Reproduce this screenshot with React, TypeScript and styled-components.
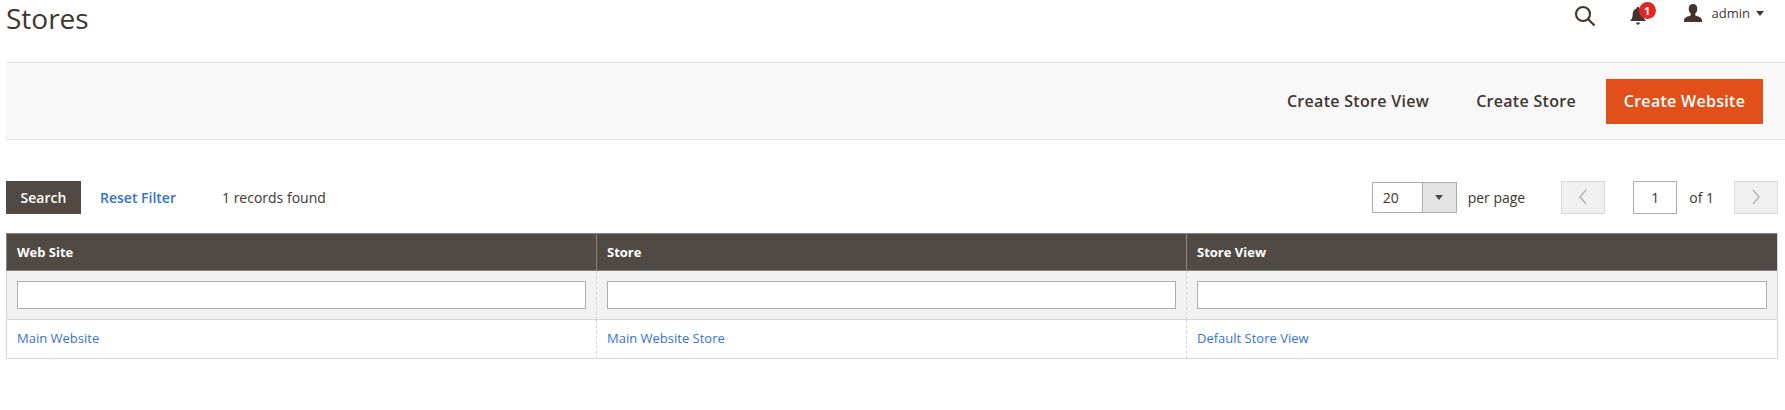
import React from 'react'
import styled, { createGlobalStyle } from 'styled-components'

const GlobalStyle = createGlobalStyle`
html, body { margin: 0; padding: 0; background: #fff; }
body { font-family: "Open Sans", "Liberation Sans", sans-serif; color: #41362f; }
`

const Page = styled.div`width: 1785px; height: 410px; overflow: hidden; padding-left: 6px; box-sizing: border-box;`

const Header = styled.header`display: flex; justify-content: space-between; height: 62px; box-sizing: border-box; padding-right: 21px;`
const Title = styled.h1`margin: 0; font-size: 28px; line-height: 36px; font-weight: 400; color: #41362f;`
const HeaderTools = styled.div`display: flex; align-items: flex-start; padding-top: 4px; height: 26px;`
const ToolIcon = styled.div`position: relative; display: flex; align-items: center; height: 24px;`
const SearchTool = styled(ToolIcon)`margin-right: 33px;`
const BellTool = styled(ToolIcon)`margin-right: 26px; width: 28px;`
const Badge = styled.span`position: absolute; left: 10px; top: -2px; width: 17px; height: 17px; border-radius: 50%; background: #e22626; color: #fff; font-size: 11px; font-weight: 700; line-height: 17px; text-align: center;`
const UserName = styled.span`font-size: 13px; margin-left: 9px; line-height: 24px; color: #41362f;`
const Caret = styled.span`margin-left: 6px; width: 0; height: 0; border-left: 4px solid transparent; border-right: 4px solid transparent; border-top: 5px solid #41362f; align-self: center;`
const UserTool = styled.div`display: flex; align-items: center; height: 24px; margin-top: -3px;`

const ActionBar = styled.div`display: flex; justify-content: flex-end; align-items: center; height: 78px; box-sizing: border-box; background: #f8f8f8; border-top: 1px solid #e3e3e3; border-bottom: 1px solid #e3e3e3; padding-right: 22px;`
const ActionLink = styled.button<{ $gap: number }>`border: 0; background: none; padding: 0; font: 600 16px "Open Sans", sans-serif; letter-spacing: .3px; color: #41362f; margin-right: ${p => p.$gap}px;`
const PrimaryButton = styled.button`border: 0; background: #e1501b; color: #fff; font: 600 16px "Open Sans", sans-serif; letter-spacing: .3px; width: 157px; height: 45px; padding: 0;`

const GridBar = styled.div`display: flex; align-items: center; justify-content: space-between; height: 34px; margin-top: 40px; padding-right: 7px;`
const BarSide = styled.div`display: flex; align-items: center;`
const SearchButton = styled.button`border: 0; background: #514943; color: #fff; font: 600 14px "Open Sans", sans-serif; width: 75px; height: 33px; padding: 0;`
const ResetLink = styled.a`color: #3572d2; font-size: 14px; font-weight: 600; margin-left: 19px;`
const Records = styled.span`font-size: 14px; margin-left: 46px; color: #41362f;`
const PageSelect = styled.div`display: flex; width: 85px; height: 31px; box-sizing: border-box; border: 1px solid #adadad; background: #fff;`
const SelectValue = styled.span`flex: 1; font-size: 14px; line-height: 29px; padding-left: 10px;`
const SelectArrow = styled.span`width: 33px; border-left: 1px solid #adadad; background: #e3e3e3; display: flex; align-items: center; justify-content: center;`
const SmallCaret = styled.span`width: 0; height: 0; border-left: 4px solid transparent; border-right: 4px solid transparent; border-top: 5px solid #514943;`
const PerPage = styled.span`font-size: 14px; margin-left: 11px; margin-right: 36px;`
const Pager = styled.div`width: 44px; height: 33px; box-sizing: border-box; border: 1px solid #d9d9d9; background: #f0f0f0; display: flex; align-items: center; justify-content: center;`
const PageInput = styled.div`width: 44px; height: 33px; box-sizing: border-box; border: 1px solid #adadad; background: #fff; font-size: 14px; line-height: 31px; text-align: center; margin-left: 28px;`
const OfText = styled.span`font-size: 14px; margin-left: 12px; margin-right: 20px;`

const Table = styled.div`display: grid; grid-template-columns: 590px 590px 591px; width: 1772px; margin-top: 19px; box-sizing: border-box; border-right: 1px solid #d6d6d6;`
const HeadCell = styled.div`background: #514943; color: #fff; font-size: 13px; font-weight: 700; height: 38px; line-height: 36px; box-sizing: border-box; padding-left: 10px; border-top: 1px solid #8a837e; border-bottom: 1px solid #8a837e; border-left: 1px solid #8a837e;`
const FilterCell = styled.div<{ $first?: boolean }>`background: #f2f2f2; height: 49px; box-sizing: border-box; padding: 10px 10px 0; border-bottom: 1px solid #d6d6d6; border-left: 1px ${p => p.$first ? 'solid' : 'dashed'} #d6d6d6;`
const FilterInput = styled.div`height: 28px; box-sizing: border-box; border: 1px solid #adadad; background: #fff;`
const DataCell = styled.div<{ $first?: boolean }>`height: 39px; box-sizing: border-box; padding-left: 10px; line-height: 37px; font-size: 13px; border-bottom: 1px solid #d6d6d6; border-left: 1px ${p => p.$first ? 'solid' : 'dashed'} #d6d6d6;`
const CellLink = styled.a`color: #3572d2;`

const columns = [
  { head: 'Web Site', value: 'Main Website' },
  { head: 'Store', value: 'Main Website Store' },
  { head: 'Store View', value: 'Default Store View' },
]

function App() {
  return (
    <Page>
      <GlobalStyle />
      <Header>
        <Title>Stores</Title>
        <HeaderTools>
          <SearchTool>
            <svg width="22" height="22" viewBox="0 0 22 22" fill="none" stroke="#41362f" strokeWidth="2.2">
              <circle cx="9" cy="9" r="7" />
              <path d="M14 14l6.5 6.5" />
            </svg>
          </SearchTool>
          <BellTool>
            <svg width="18" height="20" viewBox="0 0 18 20" fill="#41362f">
              <path d="M9 1c1 0 1.5.7 1.5 1.5C13 3.3 14.300 5.500 14.300 8c0 3 .7 5 2.700 7H1c2-2 2.700-4 2.700-7C3.700 5.500 5 3.300 7.500 2.500 7.500 1.700 8 1 9 1z" />
              <path d="M7 16.500h4c0 1.200-.9 2.300-2 2.300s-2-1.100-2-2.300z" />
            </svg>
            <Badge>1</Badge>
          </BellTool>
          <UserTool>
            <svg width="20" height="20" viewBox="0 0 20 20" fill="#41362f">
              <path d="M10 1c2.700 0 4.300 2 4.300 4.700 0 2.200-1 4-2.100 5v1.800c2.500.8 6.800 1.600 6.800 5V19H1v-1.500c0-3.400 4.300-4.200 6.800-5v-1.800c-1.100-1-2.100-2.800-2.100-5C5.700 3 7.300 1 10 1z" />
            </svg>
            <UserName>admin</UserName>
            <Caret />
          </UserTool>
        </HeaderTools>
      </Header>
      <ActionBar>
        <ActionLink $gap={47}>Create Store View</ActionLink>
        <ActionLink $gap={30}>Create Store</ActionLink>
        <PrimaryButton>Create Website</PrimaryButton>
      </ActionBar>
      <GridBar>
        <BarSide>
          <SearchButton>Search</SearchButton>
          <ResetLink>Reset Filter</ResetLink>
          <Records>1 records found</Records>
        </BarSide>
        <BarSide>
          <PageSelect>
            <SelectValue>20</SelectValue>
            <SelectArrow><SmallCaret /></SelectArrow>
          </PageSelect>
          <PerPage>per page</PerPage>
          <Pager>
            <svg width="10" height="16" viewBox="0 0 10 16" fill="none" stroke="#b5b5b5" strokeWidth="1.500"><path d="M8 1L2 8l6 7" /></svg>
          </Pager>
          <PageInput>1</PageInput>
          <OfText>of 1</OfText>
          <Pager>
            <svg width="10" height="16" viewBox="0 0 10 16" fill="none" stroke="#b5b5b5" strokeWidth="1.500"><path d="M2 1l6 7-6 7" /></svg>
          </Pager>
        </BarSide>
      </GridBar>
      <Table>
        {columns.map(c => <HeadCell key={c.head}>{c.head}</HeadCell>)}
        {columns.map((c, i) => <FilterCell key={c.head} $first={i === 0}><FilterInput /></FilterCell>)}
        {columns.map((c, i) => <DataCell key={c.head} $first={i === 0}><CellLink>{c.value}</CellLink></DataCell>)}
      </Table>
    </Page>
  )
}

export default App
